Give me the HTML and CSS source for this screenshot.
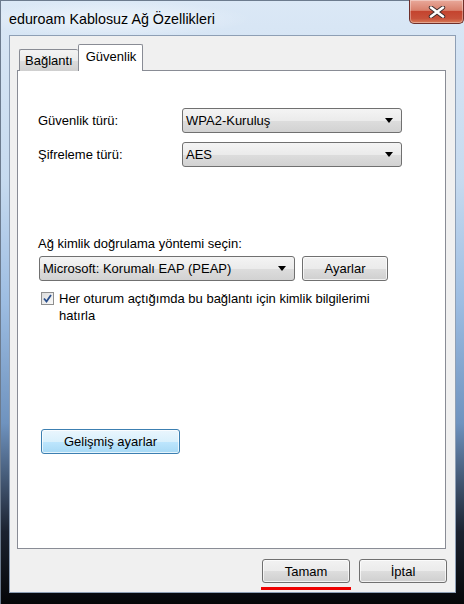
FILE: index.html
```html
<!DOCTYPE html>
<html lang="tr">
<head>
    <meta charset="UTF-8">
    <meta name="viewport" content="width=device-width, initial-scale=1.0">
    <title>eduroam Kablosuz Ağ Özellikleri</title>
    <link rel="stylesheet" href="styles.css">
</head>
<body>

<!-- Dialog window -->
<div class="window">

    <!-- Title bar -->
    <div class="titlebar">
        <span class="title">eduroam Kablosuz Ağ Özellikleri</span>
        <button class="close-btn" aria-label="Kapat">
            <svg width="18" height="12" viewBox="0 0 18 12">
                <path d="M3 1.5 L15 10.5 M15 1.5 L3 10.5" stroke="#3b2a2a" stroke-width="4.4" stroke-linecap="round"/>
                <path d="M3 1.5 L15 10.5 M15 1.5 L3 10.5" stroke="#ffffff" stroke-width="2.6" stroke-linecap="round"/>
            </svg>
        </button>
    </div>

    <!-- Client area -->
    <div class="client">

        <!-- Tabs -->
        <div class="tabs">
            <div class="tab">Bağlantı</div>
            <div class="tab active">Güvenlik</div>
        </div>

        <!-- Tab panel -->
        <div class="panel">
            <div class="field-row">
                <label class="field-label">Güvenlik türü:</label>
                <div class="select wide">
                    <span>WPA2-Kuruluş</span>
                    <span class="arrow"></span>
                </div>
            </div>
            <div class="field-row">
                <label class="field-label">Şifreleme türü:</label>
                <div class="select wide">
                    <span>AES</span>
                    <span class="arrow"></span>
                </div>
            </div>

            <p class="section-label">Ağ kimlik doğrulama yöntemi seçin:</p>
            <div class="method-row">
                <div class="select method">
                    <span>Microsoft: Korumalı EAP (PEAP)</span>
                    <span class="arrow"></span>
                </div>
                <button class="btn settings">Ayarlar</button>
            </div>

            <div class="check-row">
                <span class="checkbox">
                    <svg width="9" height="9" viewBox="0 0 9 9">
                        <path d="M1 4.5 L3.5 7.5 L8 1" fill="none" stroke="#2a4f8c" stroke-width="1.8"/>
                    </svg>
                </span>
                <span class="check-text">Her oturum açtığımda bu bağlantı için kimlik bilgilerimi hatırla</span>
            </div>

            <button class="btn advanced">Gelişmiş ayarlar</button>
        </div>

        <!-- Dialog buttons -->
        <div class="dialog-buttons">
            <div class="marked">
                <button class="btn dialog">Tamam</button>
                <div class="mark"></div>
            </div>
            <button class="btn dialog">İptal</button>
        </div>
    </div>
</div>

</body>
</html>
```

FILE: styles.css
```css
body {
    margin: 0;
    padding: 0;
    font-family: 'Liberation Sans', Arial, sans-serif;
    font-size: 13px;
    color: #000;
}
.window {
    width: 464px;
    height: 604px;
    box-sizing: border-box;
    padding: 0 8px 11px 8px;
    display: flex;
    flex-direction: column;
    background: linear-gradient(to bottom, #dbe8f6 0, #c6daef 30%, #9dbde2 50%, #6f93bf 70%, #1b2230 88%, #050608 100%);
    border-left: 1px solid #6c7b8e;
    border-top: 1px solid #6c7b8e;
}
.titlebar {
    height: 34px;
    display: flex;
    justify-content: space-between;
    align-items: flex-start;
    margin-left: -8px;
    margin-right: -8px;
    padding: 0 8px 0 8px;
    background: radial-gradient(ellipse 140px 18px at 110px 18px, rgba(255,255,255,0.55), rgba(255,255,255,0) 100%);
}
.title {
    align-self: center;
    font-size: 14.3px;
    margin-top: 1px;
}
.close-btn {
    width: 55px;
    height: 24px;
    margin-top: -1px;
    margin-right: -8px;
    border: 1px solid #6e2f2a;
    border-top: none;
    border-radius: 0 0 5px 5px;
    background: linear-gradient(to bottom, #e9a99b 0, #d8806c 45%, #c4442f 50%, #c7513a 80%, #d87a56 100%);
    box-shadow: inset 0 0 0 1px rgba(255,255,255,0.35);
    display: flex;
    align-items: center;
    justify-content: center;
    padding: 0;
}
.client {
    flex: 1;
    background-color: #f0f0f0;
    border: 1px solid #8e9fb5;
    padding: 8px 9px 0 7px;
    display: flex;
    flex-direction: column;
}
.tabs {
    display: flex;
    align-items: flex-end;
    padding-left: 2px;
    position: relative;
    z-index: 1;
    margin-bottom: -1px;
}
.tab {
    height: 21px;
    padding: 0 5px 0 5px;
    line-height: 22px;
    border: 1px solid #898c95;
    border-bottom: none;
    border-right: none;
    border-radius: 2px 2px 0 0;
    background: linear-gradient(to bottom, #f3f3f3 0, #ebebeb 50%, #dddddd 51%, #cfcfcf 100%);
}
.tab.active {
    height: 26px;
    line-height: 24px;
    padding: 0 6px 0 7px;
    border-right: 1px solid #898c95;
    background: #ffffff;
}
.panel {
    flex: 0 0 479px;
    box-sizing: border-box;
    background: #ffffff;
    border: 1px solid #898c95;
    padding: 37px 20px 0 20px;
}
.field-row {
    display: flex;
    align-items: center;
    margin-bottom: 9px;
}
.field-label {
    width: 144px;
}
.select {
    height: 25px;
    box-sizing: border-box;
    border: 1px solid #707070;
    border-radius: 3px;
    background: linear-gradient(to bottom, #f4f4f4 0, #ebebeb 50%, #dddddd 51%, #d2d2d2 100%);
    display: flex;
    align-items: center;
    justify-content: space-between;
    padding: 0 8px 0 3px;
}
.select.wide {
    width: 220px;
}
.arrow {
    width: 0;
    height: 0;
    border-left: 4px solid transparent;
    border-right: 4px solid transparent;
    border-top: 5px solid #000;
}
.section-label {
    margin: 69px 0 5px 0;
}
.method-row {
    display: flex;
    gap: 7px;
    margin-left: 1px;
}
.select.method {
    width: 256px;
}
.btn {
    font-family: inherit;
    font-size: 13px;
    color: #000;
    box-sizing: border-box;
    border: 1px solid #707070;
    border-radius: 3px;
    background: linear-gradient(to bottom, #f2f2f2 0, #ebebeb 50%, #dddddd 51%, #cfcfcf 100%);
    box-shadow: inset 0 0 0 1px rgba(255,255,255,0.7);
    padding: 0;
}
.btn.settings {
    width: 86px;
    height: 25px;
}
.check-row {
    display: flex;
    align-items: flex-start;
    margin: 9px 0 0 3px;
    width: 345px;
}
.checkbox {
    flex: 0 0 11px;
    height: 11px;
    margin-top: 2px;
    margin-right: 5px;
    border: 1px solid #8f8f8f;
    background: linear-gradient(to bottom right, #dcdcdc, #fafafa);
    display: flex;
    align-items: center;
    justify-content: center;
}
.check-text {
    line-height: 17px;
}
.advanced {
    margin: 105px 0 0 3px;
    width: 139px;
    height: 25px;
    border-color: #3c7fb1;
    background: linear-gradient(to bottom, #eaf6fd 0, #d9f0fc 50%, #bee6fd 51%, #a7d9f5 100%);
}
.dialog-buttons {
    display: flex;
    justify-content: flex-end;
    gap: 8px;
    padding-top: 10px;
    margin-right: -1px;
}
.marked {
    display: flex;
    flex-direction: column;
    align-items: center;
}
.btn.dialog {
    width: 88px;
    height: 24px;
}
.mark {
    width: 90px;
    height: 3px;
    margin-top: 4px;
    background: #ee0000;
}
```
